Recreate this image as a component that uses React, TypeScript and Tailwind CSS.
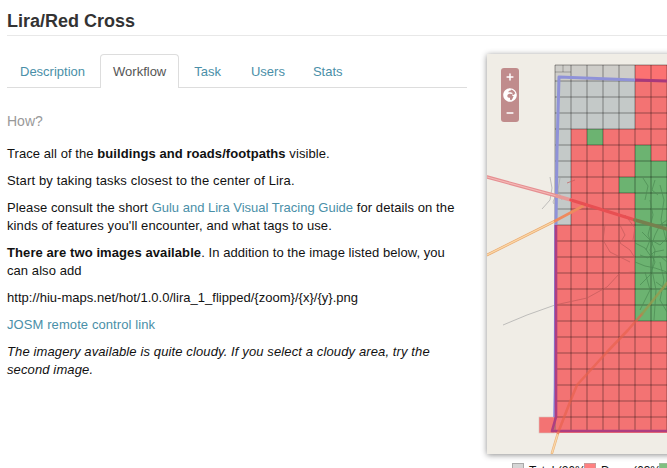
import { Minus, Plus } from 'lucide-react';
import { FaGlobeAfrica } from 'react-icons/fa';

const tabs = ['Description', 'Workflow', 'Task', 'Users', 'Stats'];

const COLS = 7;
const ROWS = 23;
const CELL = 16;
const GRID_X = 555;
const GRID_Y = 65;

// colour of one task square on the map
const cellFill = (col: number, row: number) => {
  if (row < 4 && col < 5) return row === 0 ? '#cecdc9' : '#c4c9c8';
  if (col === 0 && row < 10) return '#c4c9c8';
  if (col === 2 && row === 4) return '#6cb371';
  if (col === 4 && row === 7) return '#6cb371';
  if (col === 5 && row >= 5 && row < 16) return '#6cb371';
  if (col === 6 && row >= 6 && row < 16) return '#6cb371';
  return row === 0 ? '#fb7272' : '#f37373';
};

const cells = Array.from({ length: ROWS }, (_, row) =>
  Array.from({ length: COLS }, (_, col) => ({ col, row })),
).flat();

// thin road traces around town
const grayTracks = [
  '503,325 527,315 555,305',
  '550,177 552,188 550,200 542,209',
  '556,195 553,202 554,204',
  '560,178 558,190 562,200',
];
const redTracks = [
  '555,305 587,298 607,287 620,273 635,272',
  '605,225 603,240 610,252 622,258 630,262',
  '620,225 625,235 620,243 630,250 635,258',
  '567,183 575,180',
  '625,215 635,228 633,240',
];
const greenTracks = [
  '635,243 645,248 652,258 660,256 667,262',
  '640,285 650,275 655,262 650,250 655,235 660,225 667,220',
  '650,200 653,215 648,235 655,250 652,270 656,290 654,320',
  '660,185 664,200 661,220 666,240',
  '643,178 648,186 645,200',
  '655,180 652,190 658,195',
  '635,262 645,266 655,268 667,272',
  '640,255 648,258 654,252 664,250',
  '651,240 660,245 667,238',
  '645,272 650,290 640,310',
  '660,262 664,280 660,300 667,312',
  '656,282 667,290',
  '642,232 650,240 646,250',
];

const MapPanel = () => (
  <svg viewBox="487 54 180 400" width="180" height="400" className="block blur-[0.4px]">
    <rect x="487" y="54" width="180" height="400" fill="#f0ede6" />
    {cells.map(({ col, row }) => (
      <rect
        key={`${col}-${row}`}
        x={GRID_X + col * CELL}
        y={GRID_Y + row * CELL}
        width={CELL}
        height={CELL}
        fill={cellFill(col, row)}
      />
    ))}
    <rect x="539" y="417" width="16" height="16" fill="#f37373" stroke="#d9c3bd" strokeWidth="0.6" />

    {/* grid lines */}
    <g stroke="#000" strokeOpacity="0.25" strokeWidth="1.5">
      {Array.from({ length: ROWS }, (_, i) => (
        <line key={i} x1={GRID_X} x2="667" y1={GRID_Y + i * CELL} y2={GRID_Y + i * CELL} />
      ))}
      {Array.from({ length: COLS + 1 }, (_, i) => (
        <line key={i} y1={GRID_Y} y2="431" x1={GRID_X + i * CELL} x2={GRID_X + i * CELL} />
      ))}
      <line x1="555" x2="571" y1="72" y2="72" strokeWidth="1" />
      <line x1="563" x2="563" y1="65" y2="72" strokeWidth="1" />
    </g>

    {/* tracks */}
    <g fill="none" strokeWidth="0.7" strokeLinejoin="round">
      {grayTracks.map((p) => (
        <polyline key={p} points={p} stroke="#a8a8a8" />
      ))}
      {redTracks.map((p) => (
        <polyline key={p} points={p} stroke="#c25a5a" />
      ))}
      {greenTracks.map((p) => (
        <polyline key={p} points={p} stroke="#4a8a52" />
      ))}
    </g>

    {/* boundary */}
    <g fill="none" strokeLinejoin="round">
      <polyline points="635,80 667,81" stroke="#a8397c" strokeWidth="3" />
      <polyline points="635,80 559,77 557,150 556,225" stroke="#8f92d8" strokeWidth="3" />
      <polyline points="555,225 554.5,387 554,417" stroke="#7f80e0" strokeWidth="1.5" />
      <polyline
        points="556,225 556,417 552,431 667,431"
        stroke="#ae3e80"
        strokeWidth="2.6"
      />
    </g>

    {/* main roads */}
    <g fill="none" strokeLinejoin="round" strokeLinecap="round">
      <polyline points="487,255 555,221" stroke="#eaa96f" strokeWidth="2.6" />
      <polyline points="487,255 555,221" stroke="#fbd8a8" strokeWidth="1.2" />
      <polyline points="555,221 583,206" stroke="#ee8a5e" strokeWidth="2.6" />
      <polyline points="552,453 558,433" stroke="#eab47c" strokeWidth="2.6" />
      <polyline points="552,453 558,433" stroke="#fbd8a8" strokeWidth="1.2" />
      <polyline
        points="558,433 570,402 577,385 607,352 628,330 642,314"
        stroke="#e8614c"
        strokeOpacity="0.65"
        strokeWidth="2.6"
      />
      <polyline points="642,314 667,283" stroke="#9a9a4c" strokeOpacity="0.75" strokeWidth="2.6" />
      <polyline points="487,177 557,196" stroke="#e58f92" strokeWidth="3.4" />
      <polyline points="487,177 557,196" stroke="#f5b9b6" strokeWidth="1.2" />
      <polyline points="557,196 571,200" stroke="#e69a98" strokeWidth="3.4" />
      <polyline points="571,200 635,220" stroke="#e84f52" strokeWidth="3.4" />
      <polyline points="635,220 667,229" stroke="#76804e" strokeWidth="3.4" />
    </g>
  </svg>
);

const App = () => {
  return (
    <div className="h-[468px] w-[667px] overflow-hidden bg-white pl-[7px] font-['Liberation_Sans',Arial,sans-serif] text-[13px] leading-[18px] tracking-[0.07px] text-[#111]">
      <h1 className="h-[36px] border-b border-[#e8e8e8] pt-[11px] text-[18px] font-bold leading-[20px] tracking-normal text-[#333]">
        Lira/Red Cross
      </h1>

      <div className="mt-[18px] flex items-start">
        <div className="w-[460px] shrink-0">
          <ul className="flex h-[34px] border-b border-[#ddd] tracking-normal">
            {tabs.map((tab) =>
              tab === 'Workflow' ? (
                <li
                  key={tab}
                  className="mr-[2px] h-[34px] rounded-t-[4px] border border-b-0 border-[#ddd] bg-white px-[12px] pt-[8px] text-[#555]"
                >
                  {tab}
                </li>
              ) : (
                <li
                  key={tab}
                  className={`${tab === 'Task' ? 'mr-[4px]' : 'mr-[2px]'} px-[13px] pt-[9px] text-[#4a8fa8]`}
                >
                  {tab}
                </li>
              ),
            )}
          </ul>

          <h3 className="mt-[24px] text-[14px] leading-[18px] tracking-normal text-[#999]">How?</h3>

          <p className="mt-[15px]">
            Trace all of the <b>buildings and roads/footpaths</b> visible.
          </p>
          <p className="mt-[9px] tracking-[0.14px]">Start by taking tasks closest to the center of Lira.</p>
          <p className="mt-[9px] tracking-[0.09px]">
            Please consult the short{' '}
            <a className="tracking-normal text-[#4a8fa8]">Gulu and Lira Visual Tracing Guide</a> for
            details on the kinds of features you'll encounter, and what tags to use.
          </p>
          <p className="mt-[9px]">
            <b className="tracking-[0.09px]">There are two images available</b>.{' '}
            <span className="tracking-[0.05px]">In addition to the image listed below, you</span> can
            also add
          </p>
          <p className="mt-[9px] tracking-[0.02px]">
            http://hiu-maps.net/hot/1.0.0/lira_1_flipped/{'{zoom}/{x}/{y}'}.png
          </p>
          <p className="mt-[9px]">
            <a className="tracking-[0.09px] text-[#4a8fa8]">JOSM remote control link</a>
          </p>
          <p className="mt-[9px] italic tracking-[0.12px]">
            The imagery available is quite cloudy. If you select a cloudy area, try the second
            image.
          </p>
        </div>

        <div className="ml-[20px] w-[180px] shrink-0">
          <div className="relative h-[400px] w-[220px] bg-[#f0ede6] shadow-[0_1px_6px_rgba(0,0,0,0.45)]">
            <MapPanel />
            <div className="absolute left-[14px] top-[14px] flex h-[54px] w-[18px] flex-col items-center justify-between rounded-[3px] bg-[#c08c8c] py-[4px] text-white">
              <Plus size={10} strokeWidth={3.5} />
              <FaGlobeAfrica size={14} />
              <Minus size={10} strokeWidth={3.5} />
            </div>
          </div>

          <div className="mt-[9px] flex h-[14px] text-[12px] leading-[14px] tracking-normal text-[#111]">
            <span className="ml-[25px] h-[12px] w-[12px] shrink-0 border border-[#aaa] bg-[#d6d6d6]" />
            <span className="ml-[5px] w-[55px] shrink-0 whitespace-nowrap pt-[1px]">Total (26%)</span>
            <span className="h-[12px] w-[12px] shrink-0 border border-[#c99] bg-[#ff8080]" />
            <span className="ml-[5px] w-[58px] shrink-0 whitespace-nowrap pt-[1px]">Done (63%)</span>
            <span className="h-[12px] w-[12px] shrink-0 border border-[#9b9] bg-[#80c080]" />
          </div>
        </div>
      </div>
    </div>
  );
};

export default App;
